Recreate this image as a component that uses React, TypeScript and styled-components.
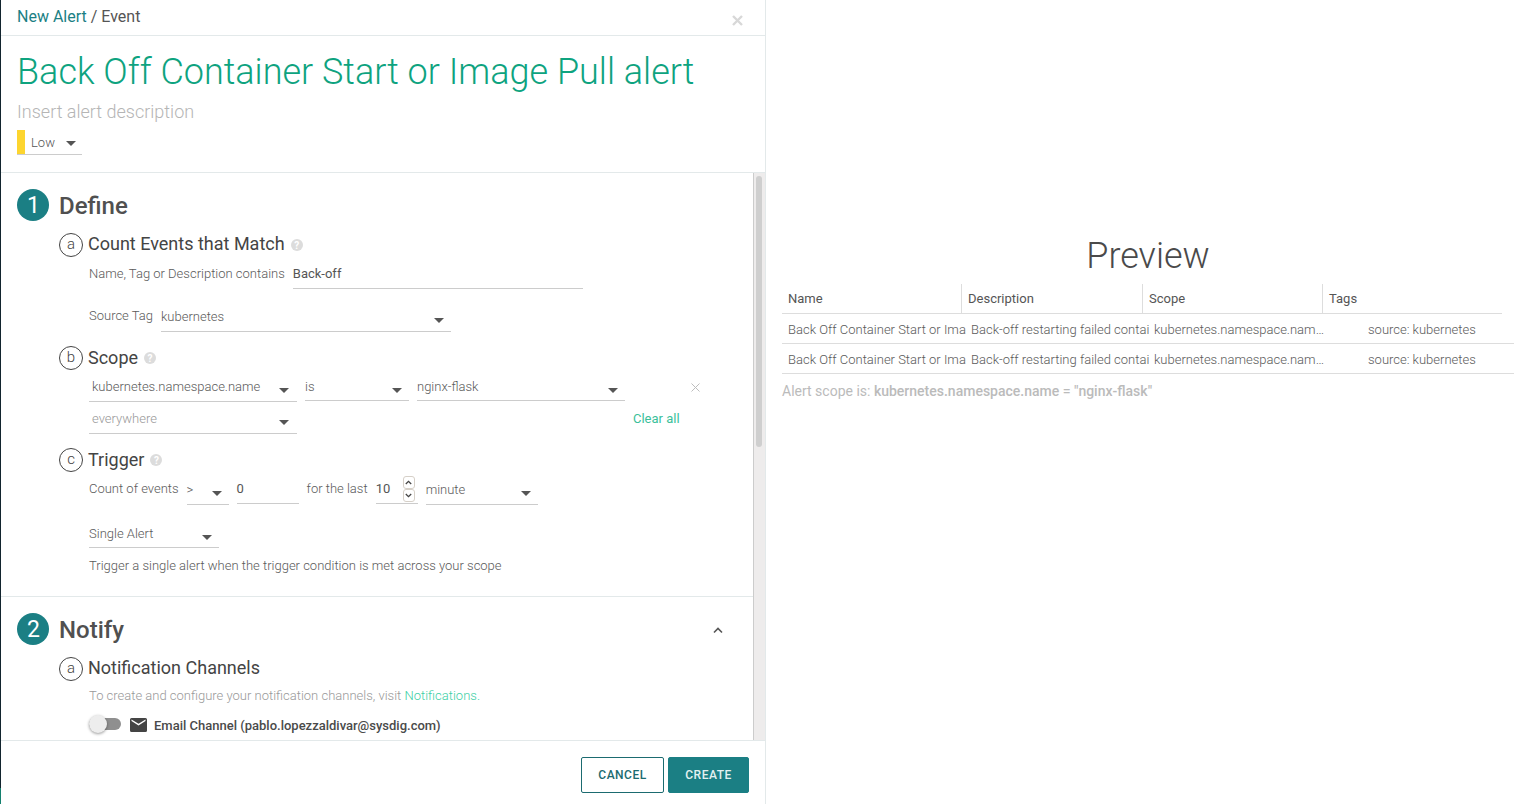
import React from 'react';
import styled, { createGlobalStyle } from 'styled-components';

const GlobalStyle = createGlobalStyle`
  html, body {
    margin: 0;
    height: 100%;
    overflow: hidden;
    background: #fff;
    font-family: Roboto, "Liberation Sans", sans-serif;
  }
  * { box-sizing: border-box; }
`;

const Caret = ({ className }: { className?: string }) => (
  <svg className={className} width="10" height="5" viewBox="0 0 10 5">
    <path d="M0 0h10L5 5z" fill="#555" />
  </svg>
);

const App = (): React.JSX.Element => (
  <Page>
    <GlobalStyle />
    <LeftEdge />
    <Editor>
      <TopBar>
        <Crumbs>
          <CrumbLink>New Alert</CrumbLink> / Event
        </Crumbs>
        <CloseIcon width="11" height="11" viewBox="0 0 11 11">
          <path d="M1 1l9 9M10 1l-9 9" stroke="#d8d8d8" strokeWidth="2.4" />
        </CloseIcon>
      </TopBar>

      <TitleBlock>
        <AlertTitle>Back Off Container Start or Image Pull alert</AlertTitle>
        <AlertDescription>Insert alert description</AlertDescription>
        <Severity>
          <SeverityMark />
          <SeverityLabel>Low</SeverityLabel>
          <Caret />
        </Severity>
      </TitleBlock>

      <ScrollArea>
        <Content>
          <DefineSection>
            <SectionHead>
              <StepBadge>1</StepBadge>
              <SectionTitle>Define</SectionTitle>
            </SectionHead>

            <SubHead>
              <SubBadge>a</SubBadge>
              <SubTitle>Count Events that Match</SubTitle>
              <Help>?</Help>
            </SubHead>
            <MatchRow>
              <FieldLabel>Name, Tag or Description contains</FieldLabel>
              <TextField $width={290} $height={23} $pad={0}>Back-off</TextField>
            </MatchRow>
            <SourceRow>
              <FieldLabel $top={3}>Source Tag</FieldLabel>
              <Select $width={290} $tall>
                <SelectText>kubernetes</SelectText>
                <Caret />
              </Select>
            </SourceRow>

            <SubHead $top={14}>
              <SubBadge>b</SubBadge>
              <SubTitle $lift={1}>Scope</SubTitle>
              <Help>?</Help>
            </SubHead>
            <ScopeRow>
              <Select $width={208} $inset={3} $tall>
                <SelectText>kubernetes.namespace.name</SelectText>
                <Caret />
              </Select>
              <Select $width={104}>
                <SelectText>is</SelectText>
                <Caret />
              </Select>
              <Select $width={208}>
                <SelectText>nginx-flask</SelectText>
                <Caret />
              </Select>
              <RemoveIcon width="9" height="9" viewBox="0 0 9 9">
                <path d="M.5.5l8 8M8.5.5l-8 8" stroke="#bdbdbd" strokeWidth="1" />
              </RemoveIcon>
            </ScopeRow>
            <ScopeRow>
              <Select $width={208} $inset={3} $tall>
                <SelectText $muted>everywhere</SelectText>
                <Caret />
              </Select>
              <ClearAll>Clear all</ClearAll>
            </ScopeRow>

            <SubHead $top={9}>
              <SubBadge>c</SubBadge>
              <SubTitle $lift={1}>Trigger</SubTitle>
              <Help>?</Help>
            </SubHead>
            <TriggerRow>
              <FieldLabel $top={3}>Count of events</FieldLabel>
              <Select $width={42} $tall>
                <SelectText>&gt;</SelectText>
                <Caret />
              </Select>
              <TextField $width={62} $height={26} $pad={3}>0</TextField>
              <FieldLabel $top={3}>for the last</FieldLabel>
              <NumberField>
                10
                <Spinner>
                  <SpinButton>
                    <svg width="7" height="5" viewBox="0 0 7 5">
                      <path d="M.8 4l2.7-2.7L6.2 4" fill="none" stroke="#444" strokeWidth="1.3" />
                    </svg>
                  </SpinButton>
                  <SpinButton>
                    <svg width="7" height="5" viewBox="0 0 7 5">
                      <path d="M.8 1l2.7 2.7L6.2 1" fill="none" stroke="#444" strokeWidth="1.3" />
                    </svg>
                  </SpinButton>
                </Spinner>
              </NumberField>
              <Select $width={112} $tall>
                <SelectText>minute</SelectText>
                <Caret />
              </Select>
            </TriggerRow>
            <AlertTypeRow>
              <Select $width={130}>
                <SelectText>Single Alert</SelectText>
                <Caret />
              </Select>
            </AlertTypeRow>
            <Hint>Trigger a single alert when the trigger condition is met across your scope</Hint>
          </DefineSection>

          <NotifySection>
            <SectionHead>
              <StepBadge>2</StepBadge>
              <SectionTitle>Notify</SectionTitle>
              <Collapse width="10" height="7" viewBox="0 0 10 7">
                <path d="M1 5.5L5 1.5l4 4" fill="none" stroke="#555" strokeWidth="1.6" />
              </Collapse>
            </SectionHead>
            <SubHead>
              <SubBadge>a</SubBadge>
              <SubTitle>Notification Channels</SubTitle>
            </SubHead>
            <ChannelHint>
              To create and configure your notification channels, visit <HintLink>Notifications.</HintLink>
            </ChannelHint>
            <ChannelRow>
              <Toggle>
                <ToggleKnob />
              </Toggle>
              <svg width="17" height="14" viewBox="0 0 17 14">
                <path
                  d="M1.5 0h14A1.5 1.5 0 0 1 17 1.5v11a1.5 1.5 0 0 1-1.5 1.5h-14A1.5 1.5 0 0 1 0 12.5v-11A1.5 1.5 0 0 1 1.5 0zm0 3l7 4.4 7-4.4V1.6l-7 4.2-7-4.2z"
                  fill="#444"
                  fillRule="evenodd"
                />
              </svg>
              <ChannelName>Email Channel (pablo.lopezzaldivar@sysdig.com)</ChannelName>
            </ChannelRow>
          </NotifySection>
        </Content>
        <ScrollTrack>
          <ScrollThumb />
        </ScrollTrack>
      </ScrollArea>

      <Footer>
        <CancelButton>CANCEL</CancelButton>
        <CreateButton>CREATE</CreateButton>
      </Footer>
    </Editor>

    <PreviewPane>
      <PreviewTitle>Preview</PreviewTitle>
      <HeaderRow>
        <HeaderCell $width={179}>Name</HeaderCell>
        <HeaderCell $width={181}>Description</HeaderCell>
        <HeaderCell $width={180}>Scope</HeaderCell>
        <HeaderCell $width={180}>Tags</HeaderCell>
      </HeaderRow>
      {[0, 1].map((row) => (
        <DataRow key={row}>
          <NameCell>Back Off Container Start or Image Pull alert</NameCell>
          <DescriptionCell>Back-off restarting failed container</DescriptionCell>
          <ScopeCell>kubernetes.namespace.name = "nginx-flask"</ScopeCell>
          <TagCell>source: kubernetes</TagCell>
        </DataRow>
      ))}
      <ScopeNote>
        Alert scope is: <strong>kubernetes.namespace.name = "nginx-flask"</strong>
      </ScopeNote>
    </PreviewPane>
  </Page>
);

const Page = styled.div`
  display: flex;
  height: 804px;
  width: 1524px;
  overflow: hidden;
`;

const LeftEdge = styled.div`
  width: 1px;
  flex-shrink: 0;
  background: linear-gradient(#12242e 98%, #14806e 98%);
`;

const Editor = styled.div`
  display: flex;
  flex-direction: column;
  width: 765px;
  height: 804px;
  flex-shrink: 0;
  border-right: 1px solid #e3e9ea;
`;

const TopBar = styled.div`
  display: flex;
  justify-content: space-between;
  height: 36px;
  padding: 7px 22px 0 16px;
  border-bottom: 1px solid #e3e9ea;
`;

const Crumbs = styled.div`
  font-size: 16px;
  line-height: 19px;
  color: #555;
`;

const CrumbLink = styled.span`
  color: #1b7f84;
`;

const CloseIcon = styled.svg`
  margin-top: 8px;
`;

const TitleBlock = styled.div`
  height: 137px;
  padding: 0 16px;
  border-bottom: 1px solid #e3e9ea;
`;

const AlertTitle = styled.div`
  margin-top: 13px;
  font-size: 36px;
  font-weight: 300;
  line-height: 46px;
  color: #0ea37f;
`;

const AlertDescription = styled.div`
  margin-top: 6px;
  font-size: 18px;
  font-weight: 300;
  line-height: 22px;
  color: #b5b5b5;
`;

const Severity = styled.div`
  display: flex;
  align-items: center;
  width: 65px;
  height: 25px;
  margin-top: 7px;
  border-bottom: 1px solid #ccc;
  svg {
    margin-top: 2px;
  }
`;

const SeverityMark = styled.div`
  width: 8px;
  height: 24px;
  background: #fdd52f;
`;

const SeverityLabel = styled.span`
  width: 35px;
  margin-left: 6px;
  font-size: 13px;
  font-weight: 300;
  color: #555;
`;

const ScrollArea = styled.div`
  display: flex;
  height: 567px;
  overflow: hidden;
`;

const Content = styled.div`
  flex: 1;
  min-width: 0;
  overflow: hidden;
  border-right: 1px solid #ccc;
`;

const ScrollTrack = styled.div`
  width: 11px;
  flex-shrink: 0;
  padding: 3px 2px 0;
  background: #eeecec;
`;

const ScrollThumb = styled.div`
  width: 6px;
  height: 271px;
  border-radius: 3px;
  background: #cfcfcf;
`;

const DefineSection = styled.div`
  height: 424px;
  padding: 16px 0 0 16px;
  border-bottom: 1px solid #e3e9ea;
`;

const NotifySection = styled.div`
  padding: 16px 0 0 16px;
`;

const SectionHead = styled.div`
  display: flex;
  align-items: center;
  gap: 9px;
  height: 32px;
`;

const StepBadge = styled.div`
  display: flex;
  align-items: center;
  justify-content: center;
  width: 32px;
  height: 32px;
  padding-left: 1px;
  border-radius: 50%;
  background: #1b7f84;
  color: #fff;
  font-size: 23px;
`;

const SectionTitle = styled.div`
  margin: 2px 0 0 1px;
  font-size: 24px;
  font-weight: 500;
  color: #505050;
`;

const Collapse = styled.svg`
  margin: 2px 30px 0 auto;
`;

const SubHead = styled.div<{ $top?: number }>`
  display: flex;
  align-items: center;
  height: 24px;
  margin: ${(p) => p.$top ?? 12}px 0 0 42px;
`;

const SubBadge = styled.div`
  display: flex;
  align-items: center;
  justify-content: center;
  width: 24px;
  height: 24px;
  margin-right: 5px;
  padding-bottom: 2px;
  border: 1px solid #444;
  border-radius: 50%;
  font-size: 15px;
  font-weight: 300;
  color: #444;
`;

const SubTitle = styled.div<{ $lift?: number }>`
  margin-bottom: ${(p) => p.$lift ?? 3}px;
  font-size: 18px;
  color: #444;
`;

const Help = styled.span`
  display: flex;
  align-items: center;
  justify-content: center;
  width: 12px;
  height: 12px;
  margin-left: 6px;
  border-radius: 50%;
  background: #dcdcdc;
  color: #fff;
  font-size: 10px;
  font-weight: 700;
`;

const FieldLabel = styled.span<{ $top?: number }>`
  margin-top: ${(p) => p.$top ?? 0}px;
  font-size: 13px;
  line-height: 15px;
  font-weight: 300;
  color: #5a5a5a;
  white-space: nowrap;
`;

const MatchRow = styled.div`
  display: flex;
  align-items: flex-start;
  gap: 8px;
  height: 23px;
  margin: 9px 0 0 72px;
`;

const SourceRow = styled.div`
  display: flex;
  align-items: flex-start;
  gap: 8px;
  height: 27px;
  margin: 16px 0 0 72px;
`;

const TextField = styled.div<{ $width: number; $height: number; $pad: number }>`
  width: ${(p) => p.$width}px;
  height: ${(p) => p.$height}px;
  padding-top: ${(p) => p.$pad}px;
  font-size: 13px;
  line-height: 15px;
  color: #555;
  border-bottom: 1px solid #ccc;
`;

const Select = styled.div<{ $width: number; $inset?: number; $tall?: boolean }>`
  display: flex;
  align-items: center;
  justify-content: space-between;
  flex-shrink: 0;
  width: ${(p) => p.$width}px;
  height: ${(p) => (p.$tall ? 27 : 26)}px;
  padding: 0 ${(p) => (p.$inset ? 8 : 7)}px 3px ${(p) => p.$inset ?? 0}px;
  border-bottom: 1px solid #ccc;
  svg {
    align-self: flex-end;
    margin-bottom: ${(p) => (p.$tall ? 5 : 4)}px;
  }
`;

const SelectText = styled.span<{ $muted?: boolean }>`
  font-size: 13px;
  font-weight: 300;
  color: ${(p) => (p.$muted ? '#999' : '#5a5a5a')};
  white-space: nowrap;
`;

const ScopeRow = styled.div`
  display: flex;
  align-items: flex-start;
  gap: 8px;
  height: 32px;
  margin: 5px 0 0 72px;
  & + & {
    margin-top: 0;
  }
`;

const RemoveIcon = styled.svg`
  margin: 8px 0 0 58px;
`;

const ClearAll = styled.span`
  margin: 4px 0 0 328px;
  font-size: 13px;
  line-height: 15px;
  color: #3bbf9b;
`;

const TriggerRow = styled.div`
  display: flex;
  align-items: flex-start;
  gap: 8px;
  height: 44px;
  margin: 6px 0 0 72px;
`;

const NumberField = styled.div`
  position: relative;
  flex-shrink: 0;
  width: 42px;
  height: 26px;
  padding-top: 3px;
  font-size: 13px;
  line-height: 15px;
  color: #555;
  border-bottom: 1px solid #ccc;
`;

const Spinner = styled.div`
  position: absolute;
  top: -2px;
  right: 3px;
  display: flex;
  flex-direction: column;
`;

const SpinButton = styled.div`
  display: flex;
  align-items: center;
  justify-content: center;
  width: 12px;
  height: 13px;
  border: 1px solid #d6d0c8;
  border-radius: 3px;
  background: #fff;
`;

const AlertTypeRow = styled.div`
  margin-left: 72px;
`;

const Hint = styled.div`
  margin: 9px 0 0 72px;
  font-size: 13px;
  font-weight: 300;
  line-height: 18px;
  color: #5a5a5a;
`;

const ChannelHint = styled.div`
  margin: 6px 0 0 72px;
  font-size: 13px;
  line-height: 18px;
  font-weight: 300;
  color: #999;
`;

const HintLink = styled.span`
  color: #3bcfa5;
`;

const ChannelRow = styled.div`
  display: flex;
  align-items: center;
  height: 24px;
  margin: 8px 0 0 72px;
`;

const Toggle = styled.div`
  position: relative;
  width: 32px;
  height: 12px;
  margin: 0 9px 3px 0;
  border-radius: 6px;
  background: #8f8f8f;
`;

const ToggleKnob = styled.div`
  position: absolute;
  top: -3px;
  left: 0;
  width: 18px;
  height: 18px;
  border-radius: 50%;
  background: #ededed;
  box-shadow: 0 1px 3px rgba(0, 0, 0, 0.4);
`;

const ChannelName = styled.span`
  margin-left: 7px;
  font-size: 13px;
  font-weight: 500;
  color: #4a4a4a;
`;

const Footer = styled.div`
  display: flex;
  justify-content: flex-end;
  gap: 4px;
  flex: 1;
  padding: 16px 16px 0 0;
  border-top: 1px solid #e3e9ea;
`;

const CancelButton = styled.button`
  width: 83px;
  height: 36px;
  padding: 0;
  font-family: inherit;
  font-size: 12px;
  font-weight: 500;
  letter-spacing: 0.5px;
  color: #1b6b70;
  background: #fff;
  border: 1px solid #1b6b70;
  border-radius: 2px;
`;

const CreateButton = styled(CancelButton)`
  width: 81px;
  color: #e3f1f1;
  background: #1b7f84;
  border-color: #1b7f84;
`;

const PreviewPane = styled.div`
  flex: 1;
  min-width: 0;
  padding: 237px 10px 0 16px;
`;

const PreviewTitle = styled.div`
  height: 47px;
  text-align: center;
  font-size: 36px;
  font-weight: 300;
  line-height: 39px;
  color: #4a4a4a;
`;

const HeaderRow = styled.div`
  display: flex;
  width: 720px;
  height: 30px;
  border-bottom: 1px solid #ddd;
`;

const HeaderCell = styled.div<{ $width: number }>`
  width: ${(p) => p.$width}px;
  padding: 7px 0 0 6px;
  font-size: 13px;
  line-height: 16px;
  color: #555;
  & + & {
    border-left: 1px solid #ddd;
  }
`;

const DataRow = styled.div`
  display: flex;
  height: 30px;
  align-items: center;
  padding-top: 2px;
  border-bottom: 1px solid #ddd;
  font-size: 13px;
  font-weight: 300;
  color: #5a5a5a;
  white-space: nowrap;
`;

const NameCell = styled.div`
  width: 184px;
  padding-left: 6px;
  overflow: hidden;
  flex-shrink: 0;
`;

const DescriptionCell = styled.div`
  width: 178px;
  margin-left: 5px;
  overflow: hidden;
  flex-shrink: 0;
`;

const ScopeCell = styled.div`
  width: 170px;
  margin-left: 5px;
  overflow: hidden;
  text-overflow: ellipsis;
  flex-shrink: 0;
`;

const TagCell = styled.div`
  margin-left: 44px;
`;

const ScopeNote = styled.div`
  margin-top: 8px;
  font-size: 14px;
  line-height: 18px;
  color: #bbb;
  strong {
    font-weight: 500;
  }
`;

export default App;
